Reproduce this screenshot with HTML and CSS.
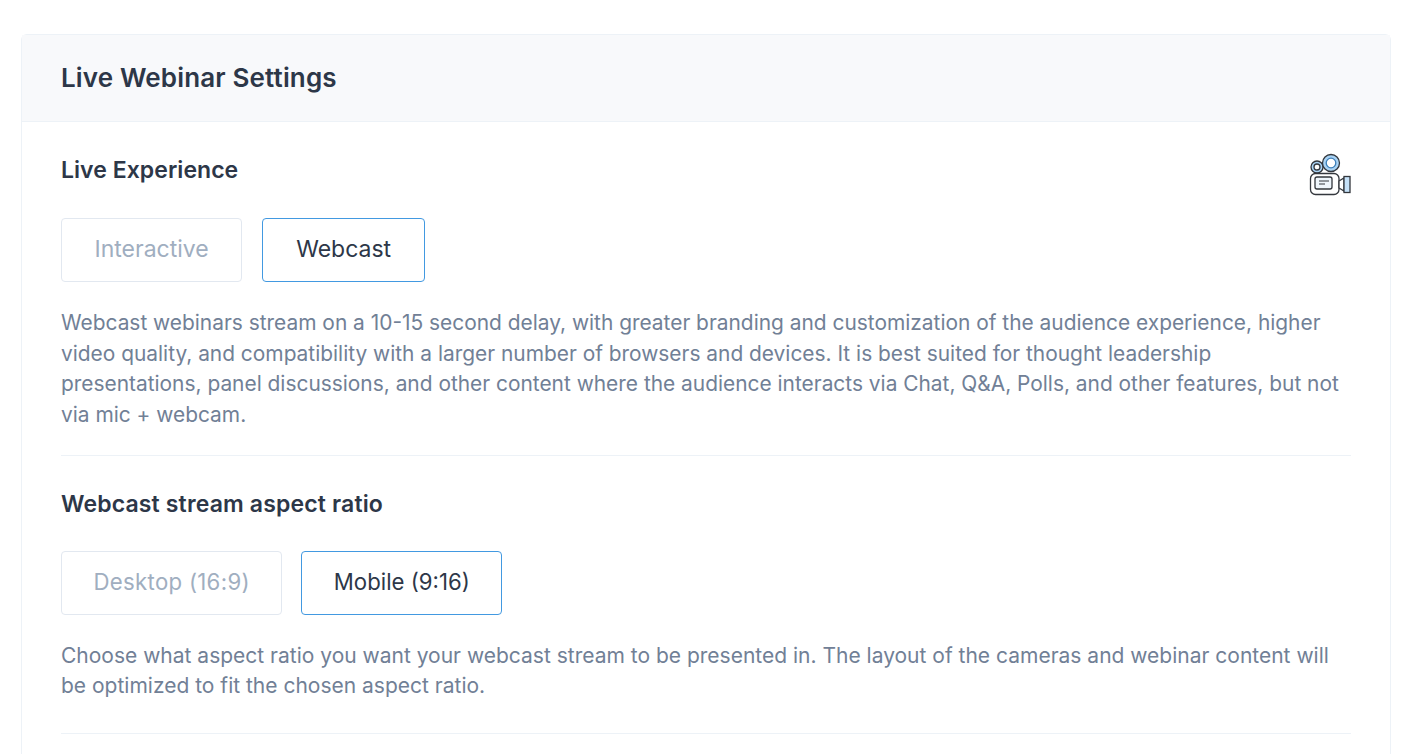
FILE: index.html
```html
<!DOCTYPE html>
<html lang="en">
<head>
<meta charset="utf-8">
<title>Live Webinar Settings</title>
<link rel="stylesheet" href="styles.css">
</head>
<body>
<main class="page">
  <section class="card">
    <header class="card-head"><h1>Live Webinar Settings</h1></header>
    <div class="card-body">
      <section class="block first">
        <div class="block-head">
          <h2>Live Experience</h2>
          <svg class="cam" viewBox="0 0 44 44" width="44" height="44" fill="none" stroke="#33373d" stroke-width="1.3">
            <circle cx="9" cy="14" r="6" fill="#a9d3f5"/>
            <circle cx="9" cy="14" r="3" fill="#fff"/>
            <circle cx="23" cy="10" r="8.5" fill="#a9d3f5"/>
            <circle cx="23" cy="10" r="4.8" fill="#fff" stroke="#3d7fb8"/>
            <rect x="2.5" y="20.5" width="28.5" height="21" rx="5" fill="#fff"/>
            <path d="M7 26a2 2 0 0 1 2-2h13a2 2 0 0 1 2 2v8a2 2 0 0 1-2 2H9a2 2 0 0 1-2-2z" fill="#eef5fb"/>
            <path d="M11 28h10M11 31h6" stroke-width="1"/>
            <path d="M31 28l5-3v13l-5-3z" fill="#fff"/>
            <rect x="36" y="23.5" width="6" height="16" fill="#c5e1f8"/>
          </svg>
        </div>
        <div class="options">
          <button class="opt">Interactive</button>
          <button class="opt on">Webcast</button>
        </div>
        <p>Webcast webinars stream on a 10-15 second delay, with greater branding and customization of the audience experience, higher<br>video quality, and compatibility with a larger number of browsers and devices. It is best suited for thought leadership<br>presentations, panel discussions, and other content where the audience interacts via Chat, Q&amp;A, Polls, and other features, but not<br>via mic + webcam.</p>
      </section>
      <section class="block second">
        <div class="block-head"><h2>Webcast stream aspect ratio</h2></div>
        <div class="options tight">
          <button class="opt wide">Desktop (16:9)</button>
          <button class="opt on">Mobile (9:16)</button>
        </div>
        <p>Choose what aspect ratio you want your webcast stream to be presented in. The layout of the cameras and webinar content will<br>be optimized to fit the chosen aspect ratio.</p>
      </section>
      <div class="more"></div>
    </div>
  </section>
</main>
</body>
</html>
```
FILE: styles.css
```css
* { box-sizing: border-box; }
html, body { margin: 0; height: 100%; overflow: hidden; background: #fff; }
body { font-family: Inter, "Liberation Sans", sans-serif; color: #2d3748; }
.page { padding: 34px 23px 0 21px; }
.card { border: 1px solid #edf2f7; border-bottom: 0; border-radius: 6px 6px 0 0; }
.card-head { height: 87px; padding: 0 39px 2px; display: flex; align-items: center; background: #f8f9fb; border-bottom: 1px solid #edf2f7; }
h1 { margin: 0; font-size: 26px; letter-spacing: .15px; font-weight: 600; color: #2d3748; }
.card-body { padding: 0 39px; }
.block { border-bottom: 1px solid #edf2f7; }
.first { padding: 32px 0 25px; }
.second { padding: 32px 0 32px; }
.block-head { display: flex; justify-content: space-between; height: 35px; }
h2 { margin: 0; font-size: 23px; letter-spacing: .05px; line-height: 33px; font-weight: 600; color: #2d3748; }
.second h2 { letter-spacing: .15px; }
.cam { margin: -1px -1px 0 0; flex: none; }
.options { display: flex; gap: 20px; margin-top: 29px; }
.options.tight { gap: 19px; margin-top: 28px; }
.opt { height: 64px; padding: 0 32.5px 2px; border: 1px solid #e2e8f0; border-radius: 4px; background: #fff; font: 400 23px Inter, sans-serif; color: #a0aec0; }
.opt.on { padding: 0 33px 2px; border-color: #4299e1; color: #2d3748; }
.tight .opt { padding: 0 31.5px 3px; font-size: 22.2px; }
.tight .opt.wide { letter-spacing: .3px; }
p { margin: 26px 0 0; font-size: 20.9px; line-height: 30.5px; color: #718096; white-space: nowrap; }
.second p { margin-top: 26px; font-size: 21px; line-height: 30px; }
.more { height: 20px; }
```
